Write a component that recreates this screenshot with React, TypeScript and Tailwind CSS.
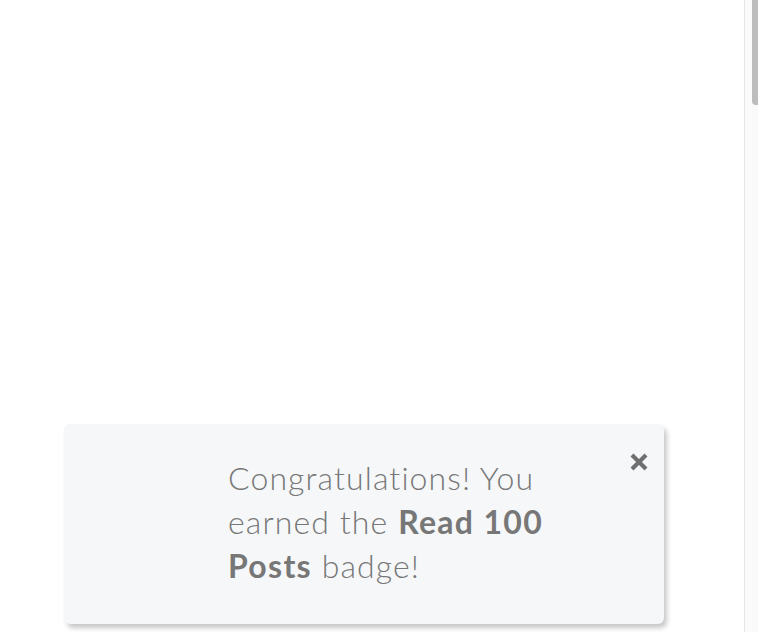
import React from "react";

export default function App() {
  return (
    <div className="flex h-[632px] w-[758px] overflow-hidden bg-white">
      <div className="relative flex-1">
        <div className="absolute left-[64px] top-[424px] h-[200px] w-[600px] rounded-[6px] bg-[#f6f7f9] shadow-[3px_4px_5px_rgba(0,0,0,0.22)]">
          <div className="flex h-full">
            <div className="w-[164px] shrink-0" />
            <p
              className="mt-[32px] w-[340px] text-[32px] leading-[44px] font-light tracking-[1.1px] text-[#777777]"
              style={{ fontFamily: "Lato, 'Open Sans', sans-serif" }}
            >
              Congratulations! You earned the <span className="font-bold tracking-[1.3px]">Read 100 Posts</span> badge!
            </p>
            <div className="flex flex-1 justify-end pr-[14px] pt-[27px]">
              <svg width="22" height="22" viewBox="0 0 22 22">
                <path d="M4 4 L18 18 M18 4 L4 18" stroke="#6f6f6f" strokeWidth="4.2" strokeLinecap="butt" />
              </svg>
            </div>
          </div>
        </div>
      </div>
      <div className="flex w-[14px] shrink-0 justify-end border-l border-[#e6e6e6] bg-[#fafafa]">
        <div className="h-[105px] w-[6px] rounded-bl-[4px] bg-[#bdbdbd]" />
      </div>
    </div>
  );
}
